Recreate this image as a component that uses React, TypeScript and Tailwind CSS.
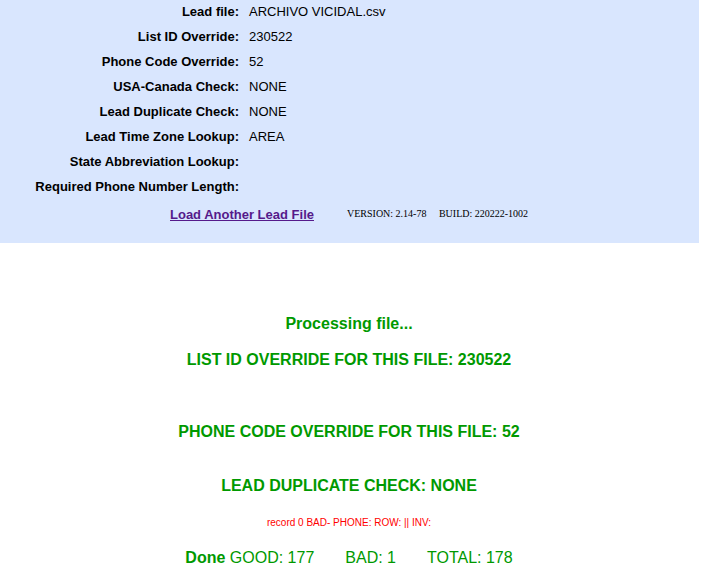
export default function App() {
  const rows: [string, string][] = [
    ["Lead file:", "ARCHIVO VICIDAL.csv"],
    ["List ID Override:", "230522"],
    ["Phone Code Override:", "52"],
    ["USA-Canada Check:", "NONE"],
    ["Lead Duplicate Check:", "NONE"],
    ["Lead Time Zone Lookup:", "AREA"],
    ["State Abbreviation Lookup:", ""],
    ["Required Phone Number Length:", ""],
  ];
  return (
    <div className="w-[708px] h-[569px] bg-white overflow-hidden" style={{ fontFamily: '"Liberation Sans", Arial, sans-serif' }}>
      <div className="w-[699px] h-[243px] bg-[#D9E6FE] flex flex-col">
        {rows.map(([l, v]) => (
          <div key={l} className="flex h-[25px] pt-[4px] text-[13px] leading-[15px] text-black">
            <div className="w-[239px] text-right font-bold">{l}</div>
            <div className="pl-[10px]">{v}</div>
          </div>
        ))}
        <div className="flex items-center h-[26px] mt-[1px]">
          <a href="#" className="ml-[170px] text-[13px] leading-[15px] font-bold text-[#551A8B] underline">Load Another Lead File</a>
          <span className="ml-[33px] text-[10px] leading-[12px] text-black" style={{ fontFamily: '"Liberation Serif", "Times New Roman", serif' }}>
            VERSION: 2.14-78&nbsp;&nbsp;&nbsp;&nbsp; BUILD: 220222-1002
          </span>
        </div>
      </div>
      <div className="w-[698px] flex flex-col items-center text-[#009900]">
        <div className="mt-[72px] text-[16px] leading-[18px] font-bold">Processing file...</div>
        <div className="mt-[18px] text-[16px] leading-[18px] font-bold">LIST ID OVERRIDE FOR THIS FILE: 230522</div>
        <div className="mt-[54px] text-[16px] leading-[18px] font-bold">PHONE CODE OVERRIDE FOR THIS FILE: 52</div>
        <div className="mt-[36px] text-[16px] leading-[18px] font-bold">LEAD DUPLICATE CHECK: NONE</div>
        <div className="mt-[22px] text-[10px] leading-[12px] text-[#FF0000]">record 0 BAD- PHONE: ROW: || INV:</div>
        <div className="mt-[20px] text-[16px] leading-[18px]">
          <b>Done</b> GOOD: 177<span className="inline-block w-[31px]"></span>BAD: 1<span className="inline-block w-[31px]"></span>TOTAL: 178
        </div>
      </div>
    </div>
  );
}
